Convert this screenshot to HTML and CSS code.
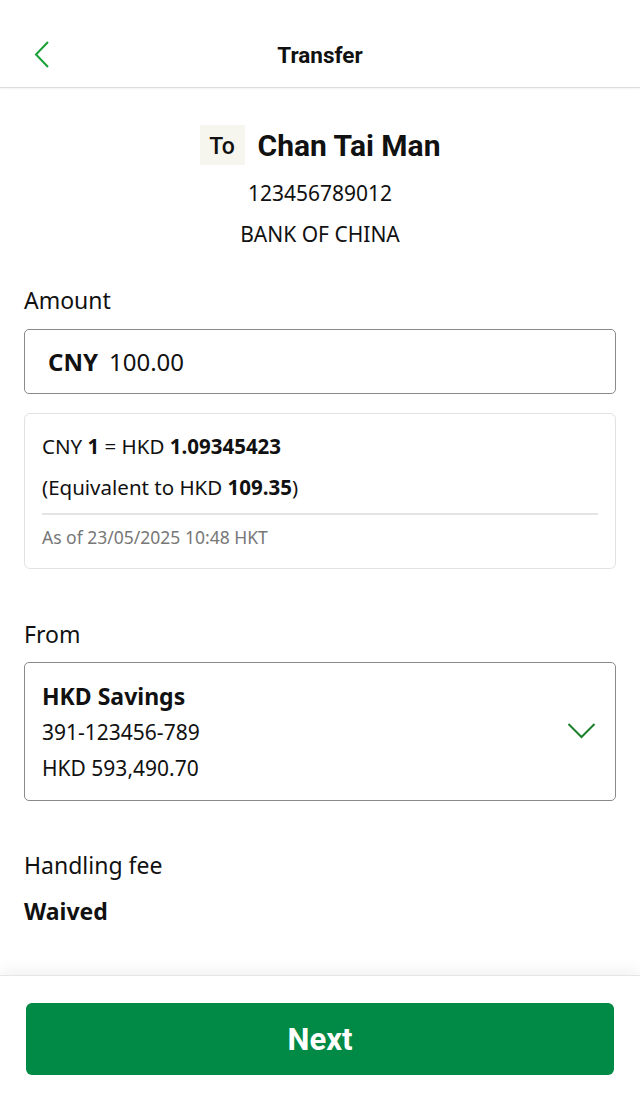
FILE: index.html
```html
<!DOCTYPE html>
<html lang="en">
<head>
  <meta charset="UTF-8" />
  <meta name="viewport" content="width=640" />
  <title>Transfer</title>
  <link rel="stylesheet" href="styles.css">
</head>
<body>
  <div class="page">
    <header class="topbar">
      <button class="back" aria-label="Back">
        <svg width="20" height="30" viewBox="0 0 20 30"><path d="M15 2 L3 14.5 L15 27" fill="none" stroke="#17a034" stroke-width="2" /></svg>
      </button>
      <h1>Transfer</h1>
    </header>

    <main class="content">
      <div class="payee">
        <div class="payee-name"><span class="to-tag">To</span><span class="name">Chan Tai Man</span></div>
        <div class="payee-line payee-acct">123456789012</div>
        <div class="payee-line">BANK OF CHINA</div>
      </div>

      <div class="field-label">Amount</div>
      <div class="amount-box">
        <span class="ccy">CNY</span>
        <span class="amount">100.00</span>
      </div>

      <div class="rate-box">
        <div class="rate-line">CNY <b>1</b> = HKD <b>1.09345423</b></div>
        <div class="rate-line">(Equivalent to HKD <b>109.35</b>)</div>
        <div class="rate-time">As of 23/05/2025 10:48 HKT</div>
      </div>

      <div class="field-label from-label">From</div>
      <div class="account-box">
        <div class="account-info">
          <div class="account-name">HKD Savings</div>
          <div class="account-line">391-123456-789</div>
          <div class="account-line">HKD 593,490.70</div>
        </div>
        <svg class="chevron" width="30" height="18" viewBox="0 0 30 18"><path d="M1.5 2 L14.5 15 L27.5 2" fill="none" stroke="#1b7f2c" stroke-width="2" /></svg>
      </div>

      <div class="field-label fee-label">Handling fee</div>
      <div class="fee-value">Waived</div>
    </main>

    <footer class="footer">
      <button class="next-btn">Next</button>
    </footer>
  </div>
</body>
</html>
```

FILE: styles.css
```css
* {
    margin: 0;
    padding: 0;
    box-sizing: border-box;
}

body {
    font-family: "Noto Sans", "Open Sans", sans-serif;
    background: #fff;
    color: #111;
}

.page {
    min-height: 1100px;
    display: flex;
    flex-direction: column;
}

.topbar {
    height: 88px;
    display: flex;
    align-items: center;
    justify-content: center;
    position: relative;
    border-bottom: 1px solid #dcdcdc;
    box-shadow: 0 1px 2px rgba(0, 0, 0, 0.05);
    padding-top: 22px;
}

.topbar h1 {
    font-family: Roboto, "Liberation Sans", sans-serif;
    font-size: 22.5px;
    font-weight: 700;
    color: #111;
}

.back {
    position: absolute;
    left: 33px;
    top: 40px;
    border: none;
    background: none;
    display: flex;
}

.content {
    flex: 1;
    padding: 0 24px;
}

.payee {
    text-align: center;
    padding-top: 36px;
}

.payee-name {
    display: flex;
    justify-content: center;
    align-items: center;
    gap: 13px;
    height: 42px;
}

.to-tag {
    font-family: Roboto, "Liberation Sans", sans-serif;
    font-size: 23px;
    font-weight: 500;
    background: #f6f5ee;
    padding: 3px 7px 0;
    width: 45px;
    line-height: 37px;
    height: 40px;
    display: inline-block;
}

.name {
    font-family: Roboto, "Liberation Sans", sans-serif;
    font-size: 30px;
    font-weight: 700;
}

.payee-line {
    font-size: 21px;
    line-height: 41px;
}

.payee-acct {
    margin-top: 7px;
}

.field-label {
    font-size: 23px;
    margin-top: 29px;
    line-height: 32px;
}

.amount-box {
    margin-top: 13px;
    height: 65px;
    border: 1.5px solid #8a8a8a;
    border-radius: 5px;
    display: flex;
    align-items: center;
    padding: 0 23px;
    font-size: 24px;
    gap: 11px;
}

.ccy {
    font-weight: 700;
}

.rate-box {
    margin-top: 19px;
    border: 1px solid #e2e2e2;
    border-radius: 6px;
    padding: 12px 17px 0;
    height: 156px;
}

.rate-line {
    font-size: 20.5px;
    line-height: 41px;
}

.rate-line b {
    font-weight: 700;
}

.rate-time {
    margin-top: 5px;
    border-top: 2px solid #e4e4e4;
    font-size: 17.5px;
    color: #777;
    padding-top: 10px;
    line-height: 24px;
}

.from-label {
    margin-top: 49px;
}

.account-box {
    margin-top: 12px;
    height: 139px;
    border: 1.5px solid #8a8a8a;
    border-radius: 5px;
    display: flex;
    align-items: center;
    justify-content: space-between;
    padding: 0 18px 0 17px;
}

.account-name {
    font-size: 23px;
    font-weight: 700;
    line-height: 36px;
}

.account-line {
    font-size: 21px;
    line-height: 36px;
}

.chevron {
    margin-bottom: 2px;
}

.fee-label {
    margin-top: 48px;
}

.fee-value {
    font-size: 23px;
    font-weight: 700;
    margin-top: 14px;
    line-height: 32px;
}

.footer {
    height: 125px;
    border-top: 1px solid #e6e6e6;
    box-shadow: 0 -6px 14px rgba(0, 0, 0, 0.05);
    padding: 27px 26px 0 26px;
}

.next-btn {
    width: 100%;
    height: 72px;
    border: none;
    border-radius: 6px;
    background: #008a45;
    color: #fff;
    font-family: Roboto, "Liberation Sans", sans-serif;
    font-size: 31px;
    font-weight: 700;
}
```
